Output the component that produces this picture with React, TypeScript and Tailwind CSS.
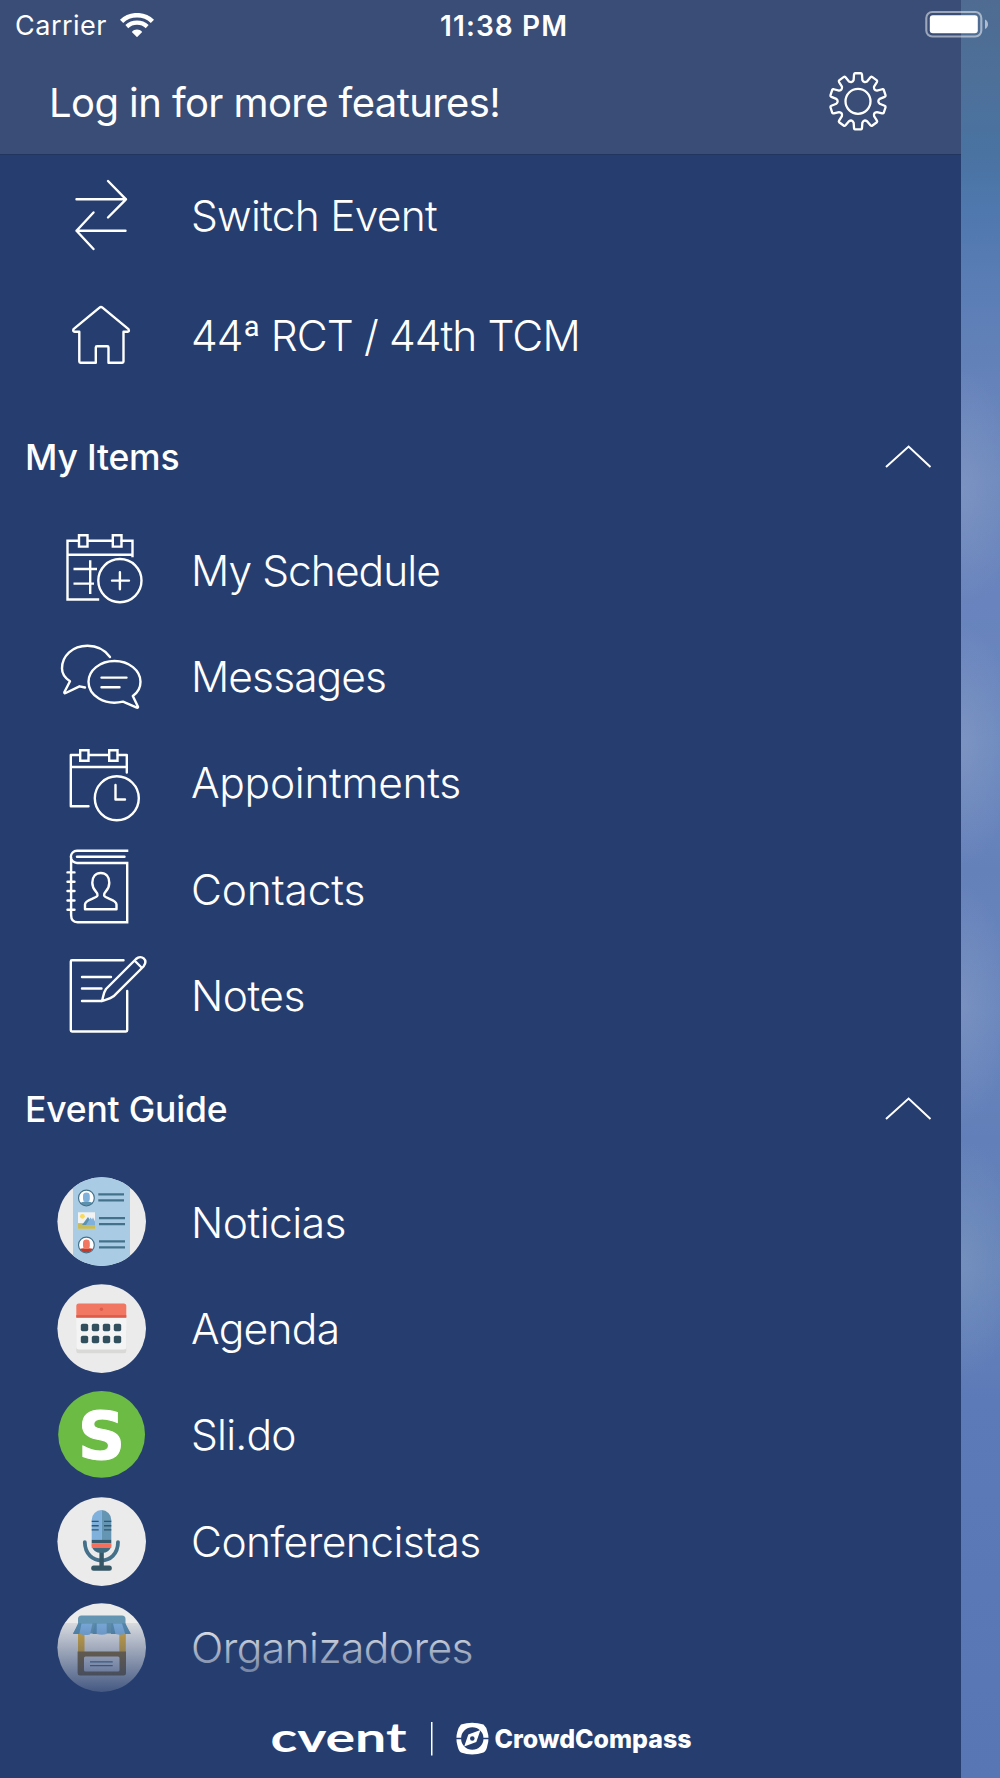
import type { ReactNode } from 'react'

interface MenuItem {
  label: string
  icon: ReactNode
  tracking?: string
}

interface SectionProps {
  title: string
  items: MenuItem[]
}

const LineIcon = ({ children }: { children: ReactNode }) => (
  <svg
    viewBox="0.5 0 100 100"
    className="h-[100px] w-[100px] shrink-0"
    fill="none"
    stroke="white"
    strokeWidth="2.4"
    strokeLinecap="round"
    strokeLinejoin="round">
    {children}
  </svg>
)

const RoundIcon = ({
  id,
  color = '#ebebeb',
  children,
}: {
  id: string
  color?: string
  children: ReactNode
}) => (
  <svg
    viewBox="0 0.4 100 100"
    className="h-[100px] w-[100px] shrink-0">
    <clipPath id={id}>
      <circle cx="49.7" cy="50" r="44.3" />
    </clipPath>
    <g clipPath={`url(#${id})`}>
      <rect width="100" height="100" fill={color} />
      {children}
    </g>
  </svg>
)

const SwitchIcon = () => (
  <LineIcon>
    <path d="M25 34.3H74.5M56.5 16L74.5 34.3L56.5 52.5" />
    <path d="M74 65.7H25M42 47.5L25 65.7L42 84" />
  </LineIcon>
)

const HomeIcon = () => (
  <LineIcon>
    <path d="M48 21.6Q49.5 20.3 51 21.6L77 43.2Q78.2 45.6 76 45.7H72V75.5Q72 76.7 70.8 76.7H57V61.5Q57 60.3 55.8 60.3H45.5Q44.3 60.3 44.3 61.5V76.7H29Q27.8 76.7 27.8 75.5V45.7H23.2Q21 45.6 22 43.2Z" />
  </LineIcon>
)

const ScheduleIcon = () => (
  <LineIcon>
    <g strokeLinecap="square" strokeLinejoin="miter">
      <path d="M27.3 20.7H16V79.5H46.5M36.5 20.7H61.3M70.3 20.7H81V36M16 34.7H80" />
      <path d="M27.5 15.3H36V26.6H27.5ZM61.3 15.3H70V26.6H61.3Z" />
      <path d="M22 49H45.5M22 63.6H42.5M38.7 40.3V74" strokeLinecap="butt" />
    </g>
    <circle cx="68.4" cy="60.6" r="21.6" />
    <path d="M60.5 60.6H77.5M68.4 52.3V69.3" />
  </LineIcon>
)

const MessagesIcon = () => (
  <LineIcon>
    <path d="M58.5 30C53 22.5 45 18.8 36 18.8C21 18.8 10.5 29 10.5 41.5C10.5 46.5 13.5 51 18.5 54.2L12.8 65.3Q12.6 66.6 14.2 66L28 59.3L33.5 60.5" />
    <path d="M71.5 74.6C53 79 37 68.5 37 54.8C37 43.5 48.5 34 63 34C77.5 34 89 43.5 89 54.8C89 60.5 86.5 65.5 81.3 69L86.5 79.7Q86.7 81 85.3 80.6Z" />
    <path d="M50 50.6H75M50 60.2H68" />
  </LineIcon>
)

const AppointmentsIcon = () => (
  <LineIcon>
    <path d="M28.3 22H19.3V73.2H37M37.5 22H57M66.3 22H75.3V39.5M19.3 34H75.3" />
    <path
      d="M28.7 17.2H37V27.8H28.7ZM57.7 17.2H66V27.8H57.7Z"
      strokeLinejoin="miter"
    />
    <circle cx="65.3" cy="65.3" r="22" />
    <path d="M64 52V66.5H73.5" />
  </LineIcon>
)

const ContactsIcon = () => (
  <LineIcon>
    <path
      d="M76.8 11.7H25.5A6 6 0 0 0 25.5 24H75.7V83.2H26Q19.6 83.2 19.6 76V18"
      strokeLinecap="butt"
      strokeLinejoin="miter"
    />
    <path d="M25.5 17.8H73" />
    <path d="M16 33.4H23M16 42.7H23M16 52H23M16 61.5H23M16 70.8H23" />
    <path d="M33.5 70.3V65.5C33.5 60 45.3 60 46 56.3C46.6 52.3 40.8 52.3 40.8 43.8C40.8 37.7 44.2 34 49.3 34C54.4 34 57.8 37.7 57.8 43.8C57.8 52.3 52 52.3 52.6 56.3C53.3 60 65 60 65 65.5V70.3Z" />
  </LineIcon>
)

const NotesIcon = () => (
  <LineIcon>
    <path d="M72 14.2H20.5Q19.3 14.2 19.3 15.4V84.3Q19.3 85.5 20.5 85.5H74.5Q75.7 85.5 75.7 84.3V45" />
    <path d="M30.5 31H59.5M30.5 42.5H50M30.5 55H50.5" />
    <path d="M50.5 55C51.8 50.5 52 46.5 54.5 43L84.5 13C90 8 97 14 92 20.5L62 50.3C58.5 53 54.5 53.5 50.5 55ZM83 14.5L90.5 22" />
  </LineIcon>
)

const NewsIcon = () => (
  <RoundIcon id="news">
    <rect x="21" width="57" height="101" fill="#a9cce4" />
    <g stroke="#44718a" strokeWidth="2.2">
      <path d="M46.3 22.7H72M46.3 28.7H72M47 46.5H73M47 52.5H73M47 69.7H73M47 75.7H73" />
    </g>
    <circle cx="34.4" cy="26.4" r="7.9" fill="white" />
    <path d="M28 31.5Q31 29.5 34.4 30Q38 29.5 40.8 31.5Q38 34 34.4 34Q30.5 34 28 31.5" fill="#5d92ae" />
    <rect x="31" y="21" width="6.8" height="9.5" rx="3.4" fill="#80b1dc" />
    <circle cx="34.4" cy="26.4" r="7.9" fill="none" stroke="#44718a" strokeWidth="1.2" />
    <rect x="26" y="40.7" width="17" height="16.6" fill="#f2f2f2" />
    <circle cx="30.4" cy="44.7" r="2.4" fill="#f8da5c" />
    <rect x="26" y="51.5" width="17" height="5.8" fill="#c8bd5a" />
    <path d="M30 53.5L36 45.5L41 53.5Z" fill="#5d92ae" />
    <path d="M34 53.5L38.5 46L40 48L41 46L43 50V53.5Z" fill="#80b1dc" />
    <circle cx="34.4" cy="73.4" r="7.9" fill="white" />
    <path d="M27.5 77.5Q31 76 34.4 77Q38 76 41.3 77.5Q38 81 34.4 81Q30.5 81 27.5 77.5" fill="#c03b2d" />
    <rect x="31" y="68" width="6.8" height="9.5" rx="3.4" fill="#f27761" />
    <circle cx="34.4" cy="73.4" r="7.9" fill="none" stroke="#44718a" strokeWidth="1.2" />
  </RoundIcon>
)

const AgendaIcon = () => (
  <RoundIcon id="agenda">
    <rect x="24.3" y="50" width="50" height="24.6" rx="2.5" fill="#d9dad8" />
    <rect x="24.3" y="28" width="50" height="42.8" rx="2.5" fill="#f4f4f4" />
    <path d="M24.3 39V27.5Q24.3 25 26.8 25H71.8Q74.3 25 74.3 27.5V39Z" fill="#f17763" />
    <rect x="24.3" y="36.5" width="50" height="2.6" fill="#dc5c4c" />
    <circle cx="49.4" cy="30.6" r="1.7" fill="#dc5c4c" />
    {[28.8, 39.8, 50.8, 61.8].map((x) => (
      <g key={x} fill="#324f5e">
        <rect x={x} y="45.2" width="7.4" height="7.4" rx="1.8" />
        <rect x={x} y="57.2" width="7.4" height="7.4" rx="1.8" />
      </g>
    ))}
  </RoundIcon>
)

const SlidoIcon = () => (
  <svg viewBox="0 0 100 100" className="h-[100px] w-[100px] shrink-0">
    <circle cx="49.6" cy="49.4" r="43.4" fill="#6cbb45" />
    <text
      x="49.6"
      y="74"
      textAnchor="middle"
      fill="white"
      stroke="white"
      strokeWidth="1"
      fontFamily="'DejaVu Sans', sans-serif"
      fontWeight="700"
      fontSize="66">
      S
    </text>
  </svg>
)

const MicIcon = () => (
  <RoundIcon id="mic">
    <path d="M32.8 50.5C33 75 66 75 66 50.5" fill="none" stroke="#44708a" strokeWidth="3.8" strokeLinecap="round" />
    <rect x="47.4" y="60" width="4.4" height="16" fill="#365766" />
    <path d="M39.7 53H59.3C59.3 58 55 61.5 49.5 61.5C44 61.5 39.7 58 39.7 53" fill="#3f6b80" />
    <path d="M39.7 48.5V28.3A9.8 9.8 0 0 1 49.5 18.5V48.5Z" fill="#80b1dc" />
    <path d="M59.3 48.5V28.3A9.8 9.8 0 0 0 49.5 18.5V48.5Z" fill="#6495b2" />
    <rect x="39.7" y="48.3" width="19.6" height="3.4" fill="#36596b" />
    <rect x="39.7" y="51.6" width="19.6" height="4.8" fill="#f4705c" />
    <path d="M39.7 29.8H46.7M39.7 34.1H46.7M39.7 38.3H46.7M52 29.8H59.3M52 34.1H59.3M52 38.3H59.3" stroke="#33566d" strokeWidth="1.4" />
    <rect x="39.2" y="74" width="20.6" height="5.2" rx="2.5" fill="#365766" />
  </RoundIcon>
)

const BoothIcon = () => (
  <RoundIcon id="booth">
    <rect x="26" y="34" width="6.5" height="22" fill="#dfae3c" />
    <rect x="67.3" y="34" width="6.5" height="22" fill="#dfae3c" />
    <path d="M25.6 54H74V75.5Q74 78 71.5 78H28Q25.6 78 25.6 75.5Z" fill="#8a6d38" />
    <rect x="32" y="59" width="35.5" height="15" rx="1.5" fill="#e8e8ee" />
    <path d="M38 64.3H60.7M38 68H60.7" stroke="#4a7794" strokeWidth="1.3" />
    <path d="M26 28V21.5Q26 18 29.5 18H70Q73.5 18 73.5 21.5V28L78.8 35.8H21Z" fill="#6495b2" />
    <path d="M26 26H33.3L30.5 36.3H21ZM43 26H49.7V36.3H40.5ZM59.3 26H66L69 36.3H59ZM73.5 26L78.8 36.3H69L66 26Z" fill="#5a8fb3" />
    <path d="M29.5 26H40.5L38 36.8Q33 38.3 27.3 36.5ZM44.7 26H54.7V36.5Q50 38 44.7 36.5ZM61 26H70L73.2 36.5Q68 38 63.5 36.5Z" fill="#80b1e0" />
  </RoundIcon>
)

const GearIcon = () => {
  const points: string[] = []
  const at = (radius: number, degrees: number) => {
    const angle = (degrees * Math.PI) / 180
    return `${(30 + radius * Math.sin(angle)).toFixed(2)} ${(30 - radius * Math.cos(angle)).toFixed(2)}`
  }
  for (let i = 0; i < 10; i++) {
    const a = i * 36
    points.push(
      `${i === 0 ? 'M' : 'L'}${at(21.8, a - 11.5)}L${at(27, a - 8.5)}Q${at(28.2, a - 7.8)} ${at(28.2, a - 6)}L${at(28.2, a + 6)}Q${at(28.2, a + 7.8)} ${at(27, a + 8.5)}L${at(21.8, a + 11.5)}Q${at(19, a + 18)} ${at(21.8, a + 24.5)}`,
    )
  }
  return (
    <svg viewBox="0 0.7 60 60" className="h-[60px] w-[60px]" fill="none" stroke="white" strokeWidth="2.3" strokeLinejoin="round">
      <path d={`${points.join('')}Z`} />
      <circle cx="30" cy="30" r="12.5" />
    </svg>
  )
}

const WifiIcon = () => (
  <svg viewBox="0 0 34 24" className="ml-[13px] h-6 w-[34px]" fill="none" stroke="white">
    <path d="M1.6 8.3C10 0.2 24 0.2 32.4 8.3" strokeWidth="4.6" />
    <path d="M6.8 13.6C12.5 8.4 21.5 8.4 27.2 13.6" strokeWidth="4.2" />
    <path d="M17 24.2L11.8 19C14.7 15.8 19.3 15.8 22.2 19Z" fill="white" stroke="none" />
  </svg>
)

const Label = ({ text, tracking = '' }: { text: string; tracking?: string }) => (
  <span
    className={`ml-[39px] mt-px whitespace-nowrap text-[42.5px] font-light leading-none ${tracking}`}>
    {text}
  </span>
)

const Row = ({ label, icon, tracking }: MenuItem) => (
  <div className="flex h-[106.35px] items-center pl-[52px]">
    {icon}
    <Label text={label} tracking={tracking} />
  </div>
)

const Section = ({ title, items }: SectionProps) => (
  <section>
    <div className="flex h-[120.5px] items-center justify-between pl-[25px] pr-[29px]">
      <h2 className="mt-0.5 text-[35.5px] font-medium leading-none tracking-[-0.2px]">
        {title}
      </h2>
      <svg viewBox="0 0 48 24" className="h-6 w-12" fill="none" stroke="white" strokeWidth="2">
        <path d="M2 22L24.6 1.5L46.5 22" />
      </svg>
    </div>
    {items.map((item) => (
      <Row key={item.label} {...item} />
    ))}
  </section>
)

const Footer = () => (
  <footer className="absolute bottom-0 left-0 h-[72px] w-full bg-[#263e6f]">
    <svg viewBox="0 0 961 72" className="h-[72px] w-[961px]" fill="white">
      <text x="270.5" y="46" textLength="136" lengthAdjust="spacingAndGlyphs" fontFamily="Lato, sans-serif" fontWeight="700" fontSize="41">
        cvent
      </text>
      <rect x="431" y="16" width="1.5" height="33.5" />
      <path
        fillRule="evenodd"
        d="M461 18.5Q472 15 483.5 18.5Q486.5 21 487.5 26Q489.5 32 487.5 39Q486.5 45 483.5 46.5Q472 50.5 461 46.5Q458.5 45 457.3 39Q455.5 32 457.3 26Q458.5 21 461 18.5ZM472.3 21.3A11.2 11.2 0 1 0 472.3 43.7A11.2 11.2 0 1 0 472.3 21.3Z"
      />
      <path
        fillRule="evenodd"
        d="M480.5 24L476.3 36L464.2 40.5L468.3 28.5ZM472.3 30.2A2.3 2.3 0 1 0 472.3 34.8A2.3 2.3 0 1 0 472.3 30.2Z"
      />
      <path d="M456 32.5H462M482.5 32.5H489" stroke="#263e6f" strokeWidth="1.3" />
      <text x="494.5" y="42" textLength="197" lengthAdjust="spacingAndGlyphs" fontFamily="Inter, sans-serif" fontWeight="800" fontSize="25.5">
        CrowdCompass
      </text>
    </svg>
  </footer>
)

const MY_ITEMS: MenuItem[] = [
  { label: 'My Schedule', icon: <ScheduleIcon />, tracking: 'tracking-[-0.95px]' },
  { label: 'Messages', icon: <MessagesIcon />, tracking: 'tracking-[-0.9px]' },
  { label: 'Appointments', icon: <AppointmentsIcon />, tracking: 'tracking-[-0.3px]' },
  { label: 'Contacts', icon: <ContactsIcon />, tracking: 'tracking-[-0.15px]' },
  { label: 'Notes', icon: <NotesIcon />, tracking: 'tracking-[-0.5px]' },
]

const EVENT_GUIDE: MenuItem[] = [
  { label: 'Noticias', icon: <NewsIcon />, tracking: 'tracking-[-0.5px]' },
  { label: 'Agenda', icon: <AgendaIcon />, tracking: 'tracking-[-0.7px]' },
  { label: 'Sli.do', icon: <SlidoIcon />, tracking: 'tracking-[-0.8px]' },
  { label: 'Conferencistas', icon: <MicIcon />, tracking: 'tracking-[-0.55px]' },
  { label: 'Organizadores', icon: <BoothIcon />, tracking: 'tracking-[-0.55px]' },
]

const TOP_ITEMS: MenuItem[] = [
  { label: 'Switch Event', icon: <SwitchIcon />, tracking: 'tracking-[-0.75px]' },
  { label: '44ª RCT / 44th TCM', icon: <HomeIcon />, tracking: 'tracking-[-0.9px]' },
]

const App = () => (
  <div className="relative flex h-[1778px] w-[1000px] overflow-hidden bg-[#263e6f] font-['Inter',sans-serif] text-white">
    <main className="relative h-full w-[961px] shrink-0">
      <header className="h-[155px] border-b border-[#22355f] bg-[#394d76]">
        <div className="relative flex h-[50px] items-center pl-[15px] text-[27px] leading-none">
          <span className="mt-px tracking-[0.5px]">Carrier</span>
          <WifiIcon />
          <span className="absolute left-[440px] top-[12px] whitespace-nowrap text-[28px] font-semibold tracking-[1.1px]">
            11:38 PM
          </span>
        </div>
        <div className="flex h-[104px] items-center justify-between pl-[49px] pr-[73px]">
          <span className="mt-0.5 text-[40px] leading-none tracking-[-0.58px]">
            Log in for more features!
          </span>
          <GearIcon />
        </div>
      </header>
      {TOP_ITEMS.map(({ label, icon, tracking }) => (
        <div key={label} className="flex h-[120.8px] items-center pl-[52px]">
          {icon}
          <Label text={label} tracking={tracking} />
        </div>
      ))}
      <Section title="My Items" items={MY_ITEMS} />
      <Section title="Event Guide" items={EVENT_GUIDE} />
      <div className="absolute bottom-[72px] left-0 h-[83px] w-full bg-linear-to-b from-[#263e6f]/10 to-[#263e6f]" />
      <Footer />
    </main>
    <aside className="relative flex-1 bg-[linear-gradient(180deg,#4f6b91_0px,#4d7099_80px,#4a73a2_155px,#4f78ae_210px,#5c7eb6_300px,#6582ba_380px,#6c88be_480px,#6883bd_600px,#6c89bf_740px,#6581ba_870px,#6986bd_1010px,#627fb9_1140px,#6884bb_1270px,#5d7ab8_1400px,#5876b4_1778px)]">
      <div className="absolute inset-0 bg-[radial-gradient(ellipse_60px_120px_at_0px_490px,rgba(139,158,196,0.5),transparent),radial-gradient(ellipse_56px_120px_at_0px_745px,rgba(139,158,196,0.5),transparent),radial-gradient(ellipse_50px_120px_at_0px_1005px,rgba(139,158,196,0.45),transparent),radial-gradient(ellipse_56px_120px_at_0px_1260px,rgba(125,155,190,0.5),transparent)]" />
    </aside>
    {/* battery sits over both the drawer and the page behind it */}
    <svg viewBox="0 0 66 30" className="absolute left-[924px] top-[9px] h-[30px] w-[66px]">
      <rect x="2.3" y="3" width="55" height="24.5" rx="6" fill="none" stroke="white" strokeOpacity="0.5" strokeWidth="2.1" />
      <rect x="5.8" y="6.2" width="48" height="18" rx="3" fill="white" />
      <path d="M61 10.5Q64 12 64 15.2Q64 18.4 61 20Z" fill="white" fillOpacity="0.55" />
    </svg>
  </div>
)

export default App
